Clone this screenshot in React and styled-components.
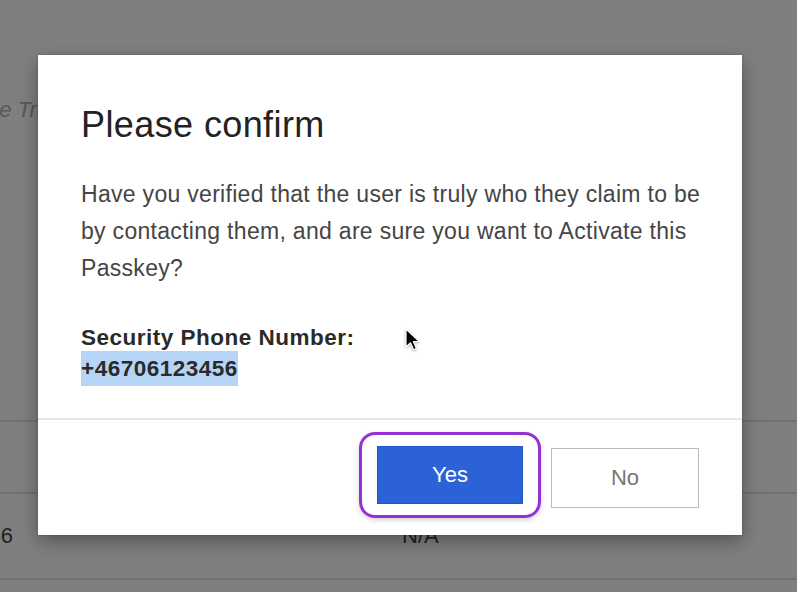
import React from "react";
import styled, { createGlobalStyle } from "styled-components";

const GlobalStyle = createGlobalStyle`
  html, body {
    margin: 0;
    padding: 0;
    overflow: hidden;
  }
  body {
    font-family: "Liberation Sans", Arial, Helvetica, sans-serif;
    background: #ffffff;
  }
`;

const Page = styled.div`
  position: relative;
  width: 797px;
  height: 592px;
  overflow: hidden;
  background: #ffffff;
`;

const Table = styled.div`
  display: flex;
  flex-direction: column;
  margin-left: -35px;
`;

const Row = styled.div`
  display: grid;
  grid-template-columns: 48px 389px 1fr;
  align-items: ${(p) => (p.$top ? "start" : "center")};
  height: ${(p) => p.$height}px;
  padding-top: ${(p) => p.$padTop || 0}px;
  box-sizing: border-box;
  border-top: ${(p) => (p.$line ? "2px solid #e2e2e2" : "none")};
`;

const Cell = styled.div`
  display: flex;
  justify-content: ${(p) => (p.$align === "right" ? "flex-end" : "flex-start")};
  font-size: 22px;
  line-height: 30px;
  white-space: nowrap;
  color: ${(p) => (p.$muted ? "#b0b0b0" : "#444444")};
  font-style: ${(p) => (p.$muted ? "italic" : "normal")};
`;

const Backdrop = styled.div`
  position: absolute;
  inset: 0;
  background: rgba(0, 0, 0, 0.5);
  display: flex;
  align-items: flex-start;
  justify-content: flex-start;
  padding: 55px 0 0 38px;
  box-sizing: border-box;
`;

const Dialog = styled.div`
  width: 704px;
  height: 480px;
  background: #ffffff;
  display: flex;
  flex-direction: column;
  box-shadow: 0 0 0 1px rgba(0, 0, 0, 0.08), 0 6px 18px rgba(0, 0, 0, 0.35);
`;

const Body = styled.div`
  flex: 1;
  padding: 48px 30px 0 43px;
  display: flex;
  flex-direction: column;
`;

const Title = styled.h2`
  margin: 0;
  font-size: 36px;
  line-height: 43px;
  font-weight: 400;
  letter-spacing: 0.4px;
  color: #222222;
`;

const Message = styled.p`
  margin: 30px 0 0;
  font-size: 23px;
  line-height: 37px;
  letter-spacing: 0.3px;
  color: #454545;
`;

const Detail = styled.div`
  margin-top: 33px;
  display: flex;
  flex-direction: column;
  align-items: flex-start;
`;

const Label = styled.div`
  font-size: 22.5px;
  line-height: 35px;
  font-weight: 700;
  letter-spacing: 0.5px;
  color: #2a2a2a;
`;

const Selected = styled.span`
  display: inline-block;
  font-size: 22.5px;
  line-height: 35px;
  font-weight: 700;
  letter-spacing: 0.5px;
  color: #2a2a2a;
  background: #b6d4f6;
  margin-top: -4px;
`;

const Divider = styled.hr`
  margin: 0;
  border: none;
  height: 2px;
  background: #e6e6e6;
`;

const Footer = styled.div`
  height: 115px;
  display: flex;
  align-items: center;
  justify-content: flex-end;
  gap: 10px;
  padding-right: 43px;
`;

const FocusRing = styled.span`
  display: inline-flex;
  padding: 11px 15px;
  border: 3px solid #9530d4;
  border-radius: 16px;
  box-shadow: 0 2px 5px rgba(0, 0, 0, 0.18);
  margin-top: -6px;
`;

const Button = styled.button`
  width: ${(p) => (p.$primary ? 146 : 148)}px;
  height: ${(p) => (p.$primary ? 58 : 60)}px;
  font-family: "Liberation Sans", Arial, sans-serif;
  font-size: 22px;
  border-radius: 0;
  cursor: pointer;
  background: ${(p) => (p.$primary ? "#2b63d6" : "#ffffff")};
  color: ${(p) => (p.$primary ? "#ffffff" : "#777777")};
  border: 1px solid ${(p) => (p.$primary ? "#1f55c4" : "#bdbdbd")};
`;

const Pointer = styled.svg`
  position: absolute;
  left: 405px;
  top: 328px;
  width: 15px;
  height: 24px;
  filter: drop-shadow(0 1px 1px rgba(0, 0, 0, 0.3));
`;

export default function App() {
  return (
    <>
      <GlobalStyle />
      <Page>
        <Table>
          <Row $height={420} $padTop={95} $top>
            <Cell $muted>Date Trusted</Cell>
          </Row>
          <Row $height={72} $line />
          <Row $height={86} $line>
            <Cell $align="right">+46706123456</Cell>
            <Cell />
            <Cell>N/A</Cell>
          </Row>
          <Row $height={20} $line />
        </Table>

        <Backdrop>
          <Dialog role="dialog">
            <Body>
              <Title>Please confirm</Title>
              <Message>
                Have you verified that the user is truly who they claim to be
                by contacting them, and are sure you want to Activate this
                Passkey?
              </Message>
              <Detail>
                <Label>Security Phone Number:</Label>
                <Selected>+46706123456</Selected>
              </Detail>
            </Body>
            <Divider />
            <Footer>
              <FocusRing>
                <Button $primary>Yes</Button>
              </FocusRing>
              <Button>No</Button>
            </Footer>
          </Dialog>
        </Backdrop>

        <Pointer viewBox="0 0 15 24">
          <path
            d="M1 1 L1 19 L5.5 14.8 L8.6 21.8 L11.4 20.6 L8.4 13.7 L14 13.4 Z"
            fill="#000"
            stroke="#fff"
            strokeWidth="1.2"
            strokeLinejoin="round"
          />
        </Pointer>
      </Page>
    </>
  );
}
